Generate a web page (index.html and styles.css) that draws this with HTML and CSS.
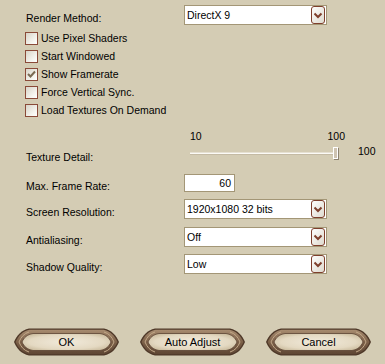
FILE: index.html
```html
<!DOCTYPE html>
<html lang="en">
<head>
  <meta charset="UTF-8" />
  <title>Display Options</title>
  <link rel="stylesheet" href="styles.css">
</head>
<body>

<div class="panel">
  <div class="row row-first">
    <span class="label">Render Method:</span>
    <div class="select">
      <span class="select-text">DirectX 9</span>
      <span class="drop"><svg width="14" height="18" viewBox="0 0 14 18"><defs><linearGradient id="dg" x1="0" y1="0" x2="1" y2="1"><stop offset="0" stop-color="#ffffff"/><stop offset="1" stop-color="#ddd8cc"/></linearGradient></defs><rect x="0.5" y="0.5" width="13" height="17" rx="2.5" fill="url(#dg)" stroke="#7e3f2c"/><path d="M3.5 7.5 L7 11 L10.5 7.5" fill="none" stroke="#7e3f2c" stroke-width="2"/></svg></span>
    </div>
  </div>

  <div class="checks">
    <label class="check"><span class="box"></span>Use Pixel Shaders</label>
    <label class="check"><span class="box"></span>Start Windowed</label>
    <label class="check"><span class="box"><svg width="11" height="11" viewBox="0 0 11 11"><path d="M2 5 L4.5 7.5 L9 2.5" fill="none" stroke="#7a6a52" stroke-width="2"/></svg></span>Show Framerate</label>
    <label class="check"><span class="box"></span>Force Vertical Sync.</label>
    <label class="check"><span class="box"></span>Load Textures On Demand</label>
  </div>

  <div class="row row-slider">
    <span class="label label-slider">Texture Detail:</span>
    <div class="slider">
      <div class="ticks"><span>10</span><span>100</span></div>
      <div class="track"><span class="thumb"></span></div>
    </div>
    <span class="slider-value">100</span>
  </div>

  <div class="row row-rate">
    <span class="label">Max. Frame Rate:</span>
    <div class="number">60</div>
  </div>

  <div class="row row-select">
    <span class="label">Screen Resolution:</span>
    <div class="select">
      <span class="select-text">1920x1080 32 bits</span>
      <span class="drop"><svg width="14" height="18" viewBox="0 0 14 18"><rect x="0.5" y="0.5" width="13" height="17" rx="2.5" fill="url(#dg)" stroke="#7e3f2c"/><path d="M3.5 7.5 L7 11 L10.5 7.5" fill="none" stroke="#7e3f2c" stroke-width="2"/></svg></span>
    </div>
  </div>

  <div class="row row-select row-gap8">
    <span class="label">Antialiasing:</span>
    <div class="select">
      <span class="select-text">Off</span>
      <span class="drop"><svg width="14" height="18" viewBox="0 0 14 18"><rect x="0.5" y="0.5" width="13" height="17" rx="2.5" fill="url(#dg)" stroke="#7e3f2c"/><path d="M3.5 7.5 L7 11 L10.5 7.5" fill="none" stroke="#7e3f2c" stroke-width="2"/></svg></span>
    </div>
  </div>

  <div class="row row-select">
    <span class="label">Shadow Quality:</span>
    <div class="select">
      <span class="select-text">Low</span>
      <span class="drop"><svg width="14" height="18" viewBox="0 0 14 18"><rect x="0.5" y="0.5" width="13" height="17" rx="2.5" fill="url(#dg)" stroke="#7e3f2c"/><path d="M3.5 7.5 L7 11 L10.5 7.5" fill="none" stroke="#7e3f2c" stroke-width="2"/></svg></span>
    </div>
  </div>
</div>

<div class="buttons">
  <button class="btn"><svg class="btn-bg" width="107" height="30" viewBox="0 0 107 30"><use href="#btnshape"/></svg><span>OK</span></button>
  <button class="btn"><svg class="btn-bg" width="107" height="30" viewBox="0 0 107 30"><use href="#btnshape"/></svg><span>Auto Adjust</span></button>
  <button class="btn"><svg class="btn-bg" width="107" height="30" viewBox="0 0 107 30"><use href="#btnshape"/></svg><span>Cancel</span></button>
</div>

<!-- shared button artwork -->
<svg width="0" height="0" class="defs">
  <defs>
    <linearGradient id="rim" x1="0" y1="0" x2="0" y2="1">
      <stop offset="0" stop-color="#a88c70"/>
      <stop offset="0.5" stop-color="#7c6048"/>
      <stop offset="1" stop-color="#5e4634"/>
    </linearGradient>
    <radialGradient id="parch" cx="0.5" cy="0.5" r="0.6">
      <stop offset="0" stop-color="#f1eadb"/>
      <stop offset="0.7" stop-color="#e4d9c2"/>
      <stop offset="1" stop-color="#cbbc9e"/>
    </radialGradient>
    <g id="btnshape">
      <path d="M1 15 C4 8 8 3.5 16 1.5 H91 C99 3.5 103 8 106 15 C103 22 99 26.5 91 28.5 H16 C8 26.5 4 22 1 15 Z" fill="#4e3828"/>
      <path d="M2.5 15 C5.5 8.5 9 4.5 16.5 2.7 H90.5 C98 4.5 101.5 8.5 104.5 15 C101.5 21.5 98 25.5 90.5 27.3 H16.5 C9 25.5 5.5 21.5 2.5 15 Z" fill="url(#rim)"/>
      <path d="M9 15 C11 10.5 14 7.5 20 6.5 H87 C93 7.5 96 10.5 98 15 C96 19.5 93 22.5 87 23.5 H20 C14 22.5 11 19.5 9 15 Z" fill="url(#parch)" stroke="#5a4232" stroke-width="0.8"/>
      <path d="M6 15 C8 10 11 6.5 16 5 M6 15 C8 20 11 23.5 16 25 M101 15 C99 10 96 6.5 91 5 M101 15 C99 20 96 23.5 91 25" fill="none" stroke="#c2a888" stroke-width="1"/>
    </g>
  </defs>
</svg>

</body>
</html>
```

FILE: styles.css
```css
* {
  box-sizing: border-box;
}

body {
  margin: 0;
  height: 364px;
  background-color: #d4ccb4;
  font-family: "Liberation Sans", Arial, sans-serif;
  font-size: 10.5px;
  color: #000;
  display: flex;
  flex-direction: column;
}

.panel {
  padding-left: 25px;
}

.row {
  display: grid;
  grid-template-columns: 159px auto;
  align-items: center;
}

.row-first {
  margin-top: 5px;
}

.label {
  line-height: 12px;
  padding-top: 5px;
  padding-left: 1px;
}

/* dropdowns */
.select {
  width: 143px;
  height: 20px;
  border: 1px solid #a39676;
  background-color: #fff;
  display: flex;
  align-items: center;
  justify-content: space-between;
}

.select-text {
  padding-left: 2px;
}

.drop {
  display: flex;
  margin-right: 1px;
}

/* checkboxes */
.checks {
  margin-top: 7px;
  display: flex;
  flex-direction: column;
  gap: 5px;
}

.check {
  display: flex;
  align-items: center;
  height: 13px;
  line-height: 13px;
}

.box {
  width: 13px;
  height: 13px;
  border: 1px solid #8a4a38;
  background: linear-gradient(135deg, #d8d4c8 0%, #f6f5f0 70%, #fff 100%);
  margin-right: 3px;
  display: flex;
  align-items: center;
  justify-content: center;
}

/* slider */
.row-slider {
  margin-top: 13px;
  grid-template-columns: 159px 174px auto;
  align-items: start;
}

.label-slider {
  margin-top: 16px;
}

.slider {
  padding-left: 6px;
}

.ticks {
  width: 155px;
  height: 12px;
  line-height: 12px;
  display: flex;
  justify-content: space-between;
}

.track {
  position: relative;
  margin-top: 10px;
  width: 148px;
  height: 3px;
  background-color: #fbfaf6;
  border-top: 1px solid #e6e0d2;
  border-bottom: 1px solid #c4baa4;
}

.thumb {
  position: absolute;
  right: 0;
  top: -6px;
  width: 5px;
  height: 12px;
  background-color: #cfc4b2;
  border: 1px solid #fff;
  box-shadow: 1px 1px 0 #8d8270;
}

.slider-value {
  margin-top: 15px;
  line-height: 12px;
}

/* number field */
.row-rate {
  margin-top: 11px;
}

.number {
  width: 51px;
  height: 18px;
  border: 1px solid #a39676;
  background-color: #fff;
  text-align: right;
  padding-right: 3px;
  line-height: 16px;
}

.row-select {
  margin-top: 7px;
}

.row-gap8 {
  margin-top: 8px;
}

/* bottom buttons */
.buttons {
  margin-top: auto;
  padding: 0 13px 7px;
  display: flex;
  justify-content: space-between;
}

.btn {
  position: relative;
  width: 107px;
  height: 30px;
  padding: 0;
  border: none;
  background: none;
  font-family: "Liberation Sans", Arial, sans-serif;
  font-size: 11px;
  color: #000;
  display: flex;
  align-items: center;
  justify-content: center;
}

.btn-bg {
  position: absolute;
  left: 0;
  top: 0;
}

.btn span {
  position: relative;
}

.defs {
  position: absolute;
}
```
